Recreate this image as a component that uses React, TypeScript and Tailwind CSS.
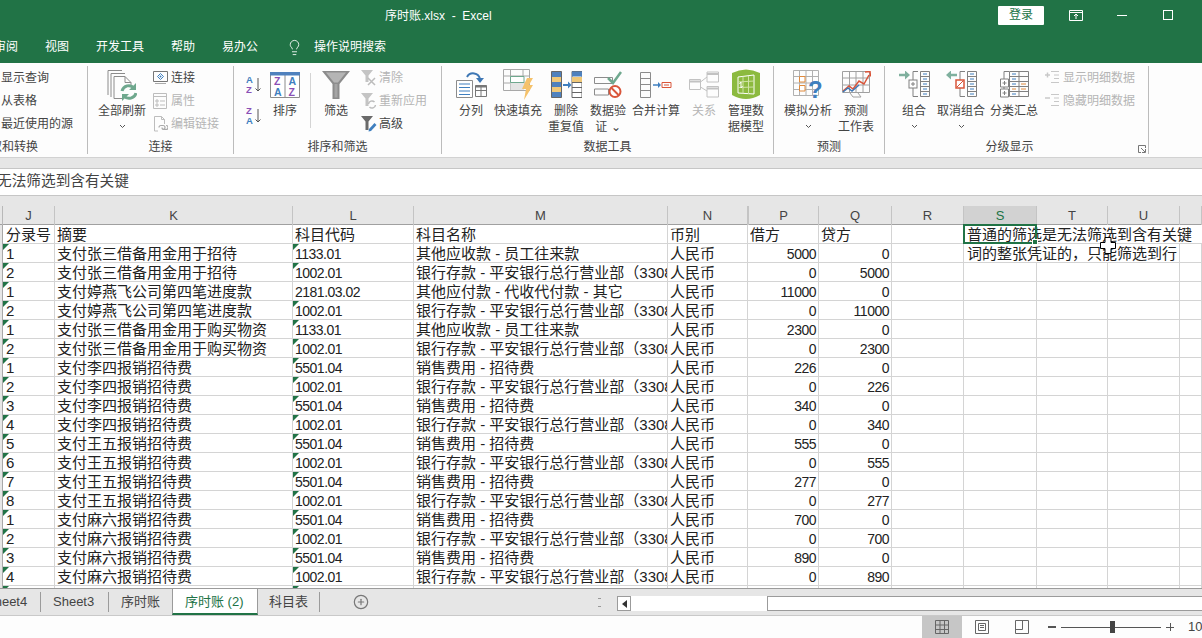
import { Lightbulb, CirclePlus } from "lucide-react";

const BANK = "银行存款 - 平安银行总行营业部（3308";
const COST = "销售费用 - 招待费";
const STAFF = "其他应收款 - 员工往来款";
const PAY = "支付张三借备用金用于招待";
const LOAN = "支付婷燕飞公司第四笔进度款";
const BUY = "支付张三借备用金用于购买物资";
const LI = "支付李四报销招待费";
const WANG = "支付王五报销招待费";
const MA = "支付麻六报销招待费";

// entry, summary, code, name, debit, credit, flag on code cell
const rows: [string, string, string, string, string, string, boolean][] = [
  ["1", PAY, "1133.01", STAFF, "5000", "0", true],
  ["2", PAY, "1002.01", BANK, "0", "5000", true],
  ["1", LOAN, "2181.03.02", "其他应付款 - 代收代付款 - 其它", "11000", "0", false],
  ["2", LOAN, "1002.01", BANK, "0", "11000", true],
  ["1", BUY, "1133.01", STAFF, "2300", "0", true],
  ["2", BUY, "1002.01", BANK, "0", "2300", true],
  ["1", LI, "5501.04", COST, "226", "0", true],
  ["2", LI, "1002.01", BANK, "0", "226", true],
  ["3", LI, "5501.04", COST, "340", "0", true],
  ["4", LI, "1002.01", BANK, "0", "340", true],
  ["5", WANG, "5501.04", COST, "555", "0", true],
  ["6", WANG, "1002.01", BANK, "0", "555", true],
  ["7", WANG, "5501.04", COST, "277", "0", true],
  ["8", WANG, "1002.01", BANK, "0", "277", true],
  ["1", MA, "5501.04", COST, "700", "0", true],
  ["2", MA, "1002.01", BANK, "0", "700", true],
  ["3", MA, "5501.04", COST, "890", "0", true],
  ["4", MA, "1002.01", BANK, "0", "890", true],
  ["", "", "", "", "", "", true],
];

const GRID = "grid grid-cols-[3px_52px_238px_121px_254px_80px_71px_73px_72px_73px_71px_72px_1fr]";
const FIRST = "relative h-[19px] border-r border-b border-[#d4d4d4] overflow-hidden whitespace-nowrap text-[15px] leading-[20px] text-[#222] pl-[3px]";
const CELL = "relative h-[19px] border-r border-b border-[#d4d4d4] overflow-hidden whitespace-nowrap text-[15px] leading-[20px] text-[#222] pl-[2px]";
const CODE = "relative h-[19px] border-r border-b border-[#d4d4d4] overflow-hidden whitespace-nowrap text-[14px] tracking-[-0.5px] leading-[20px] text-[#222] pl-[2px]";
const NUM = "relative h-[19px] border-r border-b border-[#d4d4d4] overflow-hidden whitespace-nowrap text-[14px] tracking-[-0.5px] leading-[20px] text-[#222] text-right pr-[2px]";
const EMPTY = "h-[19px] border-r border-b border-[#d4d4d4]";
const GUTTER = "h-[19px] bg-[#e6e6e6] border-r border-[#a8a8a8]";

const Flag = () => (
  <span className="absolute left-0 top-0 w-0 h-0 border-t-[6px] border-r-[6px] border-t-[#217346] border-r-transparent" />
);

const Chevron = () => (
  <svg width="7" height="5" viewBox="0 0 7 5" className="inline-block">
    <path d="M1 1l2.500 2.500L6 1" fill="none" stroke="#555" strokeWidth="1" />
  </svg>
);

const Big = ({ w, icon, lines, grey, chevron }: { w: string; icon: React.ReactNode; lines: string[]; grey?: boolean; chevron?: boolean }) => (
  <div className={`${w} shrink-0 flex flex-col items-center text-[12px] leading-[16px] ${grey ? "text-[#b5b5b5]" : "text-[#444]"}`}>
    <div className="h-[37px] flex items-center justify-center">{icon}</div>
    {lines.map(l => <div key={l} className="whitespace-nowrap">{l}</div>)}
    {chevron && <div className="h-[16px] -mt-[1px] flex items-center justify-center"><Chevron /></div>}
  </div>
);

const Small = ({ icon, text, grey, gap }: { icon?: React.ReactNode; text: string; grey?: boolean; gap?: string }) => (
  <div className={`h-[23px] flex items-center whitespace-nowrap text-[12px] ${gap || "gap-[3px]"} ${grey ? "text-[#b5b5b5]" : "text-[#444]"}`}>
    {icon}
    <span>{text}</span>
  </div>
);

const Label = ({ text, cls }: { text: string; cls?: string }) => (
  <div className={`h-[16px] text-[12px] leading-[18px] text-[#444] text-center whitespace-nowrap ${cls || ""}`}>{text}</div>
);

/* ribbon icons */
const RefreshAll = () => (
  <svg width="30" height="32" viewBox="0 0 30 32" fill="none" stroke="#8c8c8c">
    <path d="M1 26V1.500H15M4 28V4.500H18M7 29.500V7.500H18L24 13.500V18M18 7.500V13.500H24M7 29.500H15" />
    <path d="M15 22a7 7 0 0 1 12-3" stroke="#6fa88e" strokeWidth="3" />
    <path d="M29 24a7 7 0 0 1-12 3" stroke="#6fa88e" strokeWidth="3" />
    <path d="M29 14v7h-7zM15 32v-7h7z" fill="#6fa88e" stroke="none" />
  </svg>
);
const Connect = () => (
  <svg width="15" height="14" viewBox="0 0 15 14" fill="none">
    <path d="M.5.5h14v10h-14z" stroke="#777" />
    <path d="M2 12.500h11" stroke="#aaa" />
    <path d="M7.500 2.500l3 3-3 3-3-3z" stroke="#3f7fbf" />
    <circle cx="7.500" cy="5.500" r="1" fill="#3f7fbf" />
  </svg>
);
const Props = () => (
  <svg width="14" height="16" viewBox="0 0 14 16" fill="none" stroke="#bdbdbd">
    <path d="M.5.5h13v15H.5zM.5 3.500h13" />
    <path d="M3 7h2v2H3zM3 11h2v2H3zM7 8h5M7 12h5" />
  </svg>
);
const EditLinks = () => (
  <svg width="15" height="16" viewBox="0 0 15 16" fill="none" stroke="#bdbdbd">
    <path d="M1.500 15V.5h7l3 3V8M8.500.5v3h3M1.500 15H5" />
    <path d="M6 11.500a2 2 0 0 1 2-2h2a2 2 0 0 1 0 4M13 9.500a2 2 0 0 1 0 4h-2a2 2 0 0 1-2-2" strokeWidth="1.200" stroke="#aaa" />
  </svg>
);
const SortSmall = ({ top, bottom, topC, bottomC }: { top: string; bottom: string; topC: string; bottomC: string }) => (
  <svg width="15" height="18" viewBox="0 0 15 18">
    <text x="0" y="8" fontSize="9.500" fontWeight="700" fill={topC} fontFamily="Liberation Sans">{top}</text>
    <text x="0" y="17.500" fontSize="9.500" fontWeight="700" fill={bottomC} fontFamily="Liberation Sans">{bottom}</text>
    <path d="M12 3v13M9.500 13.500L12 16l2.500-2.500" fill="none" stroke="#555" />
  </svg>
);
const SortBig = () => (
  <svg width="30" height="26" viewBox="0 0 30 26">
    <path d="M.5.5h29v25H.5zM15 .5v25" fill="#fff" stroke="#8c8c8c" />
    <path d="M0 0h30v3.500H0z" fill="#4f81bd" />
    <text x="4" y="13" fontSize="10.500" fontWeight="700" fill="#8a4fb5" fontFamily="Liberation Sans">Z</text>
    <text x="4" y="23.500" fontSize="10.500" fontWeight="700" fill="#3f7fbf" fontFamily="Liberation Sans">A</text>
    <text x="18.500" y="13" fontSize="10.500" fontWeight="700" fill="#3f7fbf" fontFamily="Liberation Sans">A</text>
    <text x="18.500" y="23.500" fontSize="10.500" fontWeight="700" fill="#8a4fb5" fontFamily="Liberation Sans">Z</text>
  </svg>
);
const Funnel = () => (
  <svg width="28" height="28" viewBox="0 0 28 28">
    <path d="M0 0h28L17.500 13v15h-7V13z" fill="#8c8c8c" />
    <path d="M4 1.500h20L16 11.500h-4z" fill="#b5b5b5" />
    <path d="M12.500 13h3v13.500h-3z" fill="#a5a5a5" />
  </svg>
);
const ClearI = () => (
  <svg width="16" height="16" viewBox="0 0 16 16" fill="none">
    <path d="M0 0h12L7.500 5.500V12h-3V5.500z" fill="#c4c4c4" />
    <path d="M7 8l7 7M14 8l-7 7" stroke="#bcbcbc" strokeWidth="1.500" />
  </svg>
);
const ReapplyI = () => (
  <svg width="16" height="16" viewBox="0 0 16 16" fill="none">
    <path d="M0 0h12L7.500 5.500V13h-3V5.500z" fill="#c4c4c4" />
    <path d="M7.500 11a3.500 3.500 0 0 1 6-2M14.500 12a3.500 3.500 0 0 1-6 2" stroke="#bcbcbc" strokeWidth="1.500" />
  </svg>
);
const AdvancedI = () => (
  <svg width="16" height="16" viewBox="0 0 16 16" fill="none">
    <path d="M0 0h12L7.500 5.500V14h-3V5.500z" fill="#6a6a6a" />
    <path d="M8 13l-.5 2.500L10 15l5.500-6-2-2z" fill="#3f7fbf" />
  </svg>
);
const TextToCols = () => (
  <svg width="31" height="27" viewBox="0 0 31 27" fill="none">
    <path d="M.5 9.500h16v17H.5z" fill="#fff" stroke="#8c8c8c" />
    <path d="M3 13h11M3 16.500h11M3 20h11M3 23.500h11" stroke="#3f7fbf" />
    <path d="M19.500 14.500h11v11h-11zM19.500 19.500h11M25 14.500v11" stroke="#777" />
    <path d="M19.500 14.500h11v2h-11z" fill="#777" />
    <path d="M11 6a7 7 0 0 1 13 2" stroke="#3f78b5" strokeWidth="2" />
    <path d="M20 7h8l-4 5z" fill="#3f78b5" />
  </svg>
);
const FlashFill = () => (
  <svg width="31" height="31" viewBox="0 0 31 31" fill="none">
    <path d="M.5.5h26v21H.5zM.5 7h26M.5 14h26M7.500.500v21M20 .5v21" stroke="#a8a8a8" />
    <path d="M7.500 7.500H21v6H7.500z" fill="#fff" stroke="#6fa88e" />
    <path d="M7.500 14H21v7H7.500z" fill="#e4e4e4" />
    <path d="M24 9h6l-4 7h4L21 31l2-11h-4z" fill="#f5c26b" />
  </svg>
);
const RemoveDup = () => (
  <svg width="31" height="27" viewBox="0 0 31 27">
    <path d="M.5.5h10v26H.5z" fill="#4f81bd" stroke="#666" />
    <path d="M1 6h9v5H1zM1 16h9v5H1z" fill="#f0c878" />
    <path d="M21 .5h10v26H21z" fill="#fff" stroke="#666" />
    <path d="M21 .500h10v5H21z" fill="#4f81bd" />
    <path d="M21 6h10v5H21z" fill="#f0c878" />
    <path d="M21 11.500h10M21 16.500h10M21 21.500h10" stroke="#666" />
    <path d="M12 14h6" stroke="#3f7fbf" strokeWidth="2" />
    <path d="M17 10.500l3.500 3.500-3.500 3.500z" fill="#3f7fbf" />
  </svg>
);
const Validate = () => (
  <svg width="28" height="27" viewBox="0 0 28 27" fill="none">
    <path d="M.5 6.500h18v6H.5zM.5 18h14v6H.5z" stroke="#8c8c8c" />
    <path d="M14 7l5 5L27 1" stroke="#6fa88e" strokeWidth="2.500" />
    <circle cx="21" cy="20.500" r="5.500" fill="#fff" stroke="#d9553a" strokeWidth="2" />
    <path d="M17.500 17l7 7" stroke="#d9553a" strokeWidth="2" />
  </svg>
);
const Consolidate = () => (
  <svg width="32" height="26" viewBox="0 0 32 26" fill="none">
    <path d="M.5.5h10v25H.5zM.5 6.500h10M.5 12.500h10M.5 18.500h10" stroke="#8c8c8c" />
    <path d="M13 13h6" stroke="#3f7fbf" strokeWidth="1.500" />
    <path d="M18 10l3 3-3 3z" fill="#3f7fbf" />
    <path d="M22 10.500h9v5h-9z" stroke="#d9553a" />
    <path d="M24 13h5" stroke="#d9553a" />
  </svg>
);
const Relations = () => (
  <svg width="30" height="27" viewBox="0 0 30 27" fill="none" stroke="#c2c2c2">
    <path d="M.5 8.500h11v10H.5zM18 1h11.500v10H18zM18 15.500h11.500v10.500H18z" />
    <path d="M.5 10.500h11M18 3h11.500M18 17.500h11.500" strokeWidth="2" />
    <path d="M11.500 11L18 6M11.500 16L18 20" />
  </svg>
);
const DataModel = () => (
  <svg width="28" height="31" viewBox="0 0 28 31">
    <path d="M0 4Q14-3 28 4V26Q14 34 0 26z" fill="#8cba3f" />
    <path d="M6 8l16-2v19L6 24z" fill="none" stroke="#fff" />
    <path d="M11 7.500V24.500M16.500 7V25M6 13l16-1M6 18.500l16-.5" fill="none" stroke="#cfe3a5" />
    <path d="M9 13v6M9 13l-1.500 2M9 19l1.500-2" fill="none" stroke="#fff" />
  </svg>
);
const WhatIf = () => (
  <svg width="31" height="30" viewBox="0 0 31 30" fill="none">
    <path d="M.5.5h25v25H.5zM.5 6.500h25M.5 13h25M.5 19.500h25M6.500.500v25M13 .5v25M19.500 .5v25" stroke="#b0b0b0" />
    <path d="M6.500 6.500H12V12H6.500zM6.500 15.500H12V21H6.500z" fill="#fff" stroke="#e08a3c" />
    <text x="15" y="28" fontSize="24" fontWeight="700" fill="#3f7fbf" fontFamily="Liberation Sans">?</text>
  </svg>
);
const Forecast = () => (
  <svg width="29" height="27" viewBox="0 0 29 27" fill="none">
    <path d="M.5.5h27v21H.5zM.5 7h27M.5 14h27M7.500.500v21M14 .5v21M21 .5v21" stroke="#a0a0a0" />
    <path d="M1 20l6-5 4 3 6-8 5 3 5-9" stroke="#d9553a" strokeWidth="1.500" />
    <path d="M23 1l5-.5.5 5" stroke="#d9553a" strokeWidth="1.500" />
    <path d="M1 21l5-4 4 3 7-6" stroke="#3f78b5" strokeWidth="1.500" />
    <path d="M8 22l3 4h8l-3-4" stroke="#a0a0a0" />
  </svg>
);
const Rows = ({ x }: { x: number }) => (
  <g>
    <path d={`M${x}.5 .5h9v25h-9zM${x}.5 5.500h9M${x}.5 10.500h9M${x}.5 15.500h9M${x}.5 20.500h9`} stroke="#808080" fill="none" />
    <path d={`M${x + 3} 3h4M${x + 3} 8h4M${x + 3} 13h4M${x + 3} 18h4M${x + 3} 23h4`} stroke="#3f7fbf" />
  </g>
);
const Group = () => (
  <svg width="31" height="27" viewBox="0 0 31 27" fill="none">
    <path d="M14 .5h5M14 .5v25h5" stroke="#808080" />
    <rect x="10" y="9" width="8" height="8" fill="#fff" stroke="#808080" />
    <path d="M12 13h4M14 11v4" stroke="#808080" />
    <path d="M0 4h8" stroke="#7fb09e" strokeWidth="2.500" />
    <path d="M6 -.5l5 4.500-5 4.500z" fill="#7fb09e" />
    <Rows x={21} />
  </svg>
);
const Ungroup = () => (
  <svg width="31" height="27" viewBox="0 0 31 27" fill="none">
    <path d="M14 .5h5M14 .5v25h5" stroke="#808080" />
    <rect x="10" y="9" width="8" height="8" fill="#fff" stroke="#d9553a" strokeWidth="1.500" />
    <path d="M11 16l6-6" stroke="#d9553a" />
    <path d="M3 4h8" stroke="#7fb09e" strokeWidth="2.500" />
    <path d="M5 -.5L0 4l5 4.500z" fill="#7fb09e" />
    <Rows x={21} />
  </svg>
);
const Subtotal = () => (
  <svg width="29" height="27" viewBox="0 0 29 27" fill="none">
    <path d="M4 .5h5M4 .5v25h5" stroke="#808080" />
    <path d="M.5 8h8v8h-8zM.5 18h8v8h-8z" fill="#fff" stroke="#808080" />
    <path d="M2.500 12h4M4.500 10v4M2.500 22h4M4.500 20v4" stroke="#808080" />
    <path d="M9.500 .5h19v25h-19zM9.500 5.500h19M9.500 10.500h19M9.500 15.500h19M9.500 20.500h19M19 .5v25" stroke="#808080" />
    <path d="M12 3h4M12 8h4M12 13h4M12 23h4" stroke="#3f7fbf" />
    <path d="M12 18h4M21 13h5M21 18h5" stroke="#e08a3c" />
  </svg>
);
const ShowDetail = ({ plus }: { plus: boolean }) => (
  <svg width="15" height="13" viewBox="0 0 15 13" fill="none" stroke="#c8c8c8">
    <path d="M0 4h5" strokeWidth="1.500" />
    {plus && <path d="M2.500 1.500v5" strokeWidth="1.500" />}
    <path d="M6 .5h8M9 4h5M9 7.500h5M6 11.500h8" />
  </svg>
);

export default function App() {
  return (
    <div className="relative w-[1202px] h-[638px] overflow-hidden flex flex-col bg-white font-['Liberation_Sans','Noto_Sans_CJK_SC',sans-serif]">
      {/* title bar */}
      <div className="h-[63px] shrink-0 bg-[#217346] text-white text-[12px] flex flex-col">
        <div className="h-[30px] flex items-center">
          <div className="ml-[385px] w-[570px] pt-[2px] whitespace-pre">序时账.xlsx  -  Excel</div>
          <div className="ml-[43px] w-[46px] h-[19px] bg-white rounded-[1px] text-[#217346] text-[12px] leading-[19px] text-center">登录</div>
          <svg width="14" height="11" viewBox="0 0 14 11" fill="none" stroke="#fff" className="ml-[25px]">
            <path d="M.5.5h13v10H.5zM.5 2.500h13M7 9V4.500M5 6l2-2 2 2" />
          </svg>
          <div className="ml-[34px] w-[10px] h-px bg-white" />
          <div className="ml-[36px] w-[10px] h-[10px] border border-white" />
        </div>
        <div className="h-[33px] flex items-center gap-[27px] -ml-[6px] pt-[1px]">
          <span>审阅</span>
          <span>视图</span>
          <span>开发工具</span>
          <span>帮助</span>
          <span>易办公</span>
          <div className="flex items-center gap-[11px] ml-[1px]">
            <Lightbulb size={17} strokeWidth={1.2} color="#fff" />
            <span>操作说明搜索</span>
          </div>
        </div>
      </div>

      {/* ribbon */}
      <div className="h-[95px] shrink-0 bg-[#fdfdfd] border-b border-[#d2d2d2] pt-[3px] flex">
        <div className="w-[88px] h-[88px] border-r border-[#bcbcbc] flex flex-col">
          <div className="h-[72px] pl-[1px]">
            <Small text="显示查询" />
            <Small text="从表格" />
            <Small text="最近使用的源" />
          </div>
          <Label text="获取和转换" cls="text-left -ml-[22px]" />
        </div>

        <div className="w-[146px] h-[88px] border-r border-[#bcbcbc] flex flex-col">
          <div className="h-[72px] flex pl-[9px]">
            <Big w="w-[50px]" icon={<RefreshAll />} lines={["全部刷新"]} chevron />
            <div className="ml-[6px]">
              <Small icon={<Connect />} text="连接" />
              <Small icon={<Props />} text="属性" grey gap="gap-[4px]" />
              <Small icon={<EditLinks />} text="编辑链接" grey />
            </div>
          </div>
          <Label text="连接" />
        </div>

        <div className="w-[208px] h-[88px] border-r border-[#bcbcbc] flex flex-col">
          <div className="h-[72px] flex pl-[12px]">
            <div className="w-[15px] flex flex-col gap-[13px] pt-[9px]">
              <SortSmall top="A" bottom="Z" topC="#3f7fbf" bottomC="#8a4fb5" />
              <SortSmall top="Z" bottom="A" topC="#8a4fb5" bottomC="#3f7fbf" />
            </div>
            <Big w="w-[40px] ml-[4px]" icon={<SortBig />} lines={["排序"]} />
            <div className="ml-[5px] mt-[7px] w-px h-[55px] bg-[#d4d4d4]" />
            <Big w="w-[40px] ml-[5px]" icon={<Funnel />} lines={["筛选"]} />
            <div className="ml-[5px]">
              <Small icon={<ClearI />} text="清除" grey gap="gap-[2px]" />
              <Small icon={<ReapplyI />} text="重新应用" grey gap="gap-[2px]" />
              <Small icon={<AdvancedI />} text="高级" gap="gap-[2px]" />
            </div>
          </div>
          <Label text="排序和筛选" />
        </div>

        <div className="w-[332px] h-[88px] border-r border-[#bcbcbc] flex flex-col">
          <div className="h-[72px] flex pl-[12px]">
            <Big w="w-[34px]" icon={<TextToCols />} lines={["分列"]} />
            <Big w="w-[60px]" icon={<FlashFill />} lines={["快速填充"]} />
            <Big w="w-[36px]" icon={<RemoveDup />} lines={["删除", "重复值"]} />
            <Big w="w-[48px]" icon={<Validate />} lines={["数据验", "证 ⌄"]} />
            <Big w="w-[48px]" icon={<Consolidate />} lines={["合并计算"]} />
            <Big w="w-[48px]" icon={<Relations />} lines={["关系"]} grey />
            <Big w="w-[36px]" icon={<DataModel />} lines={["管理数", "据模型"]} />
          </div>
          <Label text="数据工具" />
        </div>

        <div className="w-[111px] h-[88px] border-r border-[#bcbcbc] flex flex-col">
          <div className="h-[72px] flex pl-[10px]">
            <Big w="w-[48px]" icon={<WhatIf />} lines={["模拟分析"]} chevron />
            <Big w="w-[48px]" icon={<Forecast />} lines={["预测", "工作表"]} />
          </div>
          <Label text="预测" />
        </div>

        <div className="relative w-[264px] h-[88px] border-r border-[#bcbcbc] flex flex-col">
          <div className="h-[72px] flex pl-[5px]">
            <Big w="w-[48px]" icon={<Group />} lines={["组合"]} chevron />
            <Big w="w-[46px]" icon={<Ungroup />} lines={["取消组合"]} chevron />
            <Big w="w-[60px]" icon={<Subtotal />} lines={["分类汇总"]} />
            <div className="ml-[1px]">
              <Small icon={<ShowDetail plus />} text="显示明细数据" grey />
              <Small icon={<ShowDetail plus={false} />} text="隐藏明细数据" grey />
            </div>
          </div>
          <Label text="分级显示" cls="pr-[14px]" />
          <svg width="8" height="8" viewBox="0 0 8 8" fill="none" stroke="#777" className="absolute right-[2px] bottom-[1px]">
            <path d="M7.500 3V.5H.5v7H3M3 3l4 4M7.500 4v3.500H4" />
          </svg>
        </div>
      </div>

      {/* formula bar */}
      <div className="h-[11px] shrink-0 bg-[#e6e6e6] border-b border-[#c6c6c6]" />
      <div className="h-[27px] shrink-0 bg-white border-b border-[#c6c6c6] text-[14.670px] leading-[25px] text-[#444] whitespace-nowrap -ml-[3px]">无法筛选到含有关键</div>
      <div className="h-[10px] shrink-0 bg-[#e6e6e6]" />

      {/* sheet */}
      <div className="h-[382px] shrink-0 overflow-hidden">
        <div className={`${GRID} h-[19px] bg-[#e6e6e6] border-b border-[#a0a0a0] text-[13px] leading-[19px] text-[#444] text-center`}>
          <div className="border-r border-[#b8b8b8]" />
          {["J", "K", "L", "M", "N", "P", "Q", "R", "S", "T", "U", ""].map(c => (
            <div key={c} className={`border-r border-[#c4c4c4] ${c === "S" ? "bg-[#d2d2d2] text-[#217346]" : ""} ${c === "P" ? "border-l" : ""}`}>{c}</div>
          ))}
        </div>

        <div className={GRID}>
          <div className={GUTTER} />
          <div className={FIRST}>分录号</div>
          <div className={CELL}>摘要</div>
          <div className={CELL}>科目代码</div>
          <div className={CELL}>科目名称</div>
          <div className={CELL}>币别</div>
          <div className={CELL}>借方</div>
          <div className={CELL}>贷方</div>
          <div className={EMPTY} />
          <div className="relative col-span-4 h-[19px] border-b border-[#d4d4d4] whitespace-nowrap text-[15px] leading-[20px] text-[#222] pl-[3px]">
            普通的筛选是无法筛选到含有关键
            <div className="absolute -left-px -top-px w-[74px] h-[20px] border-2 border-[#217346]">
              <span className="absolute -right-[3px] -bottom-[3px] w-[6px] h-[6px] bg-[#217346] border border-white" />
            </div>
          </div>
        </div>

        {rows.map((r, i) => (
          <div key={i} className={GRID}>
            <div className={GUTTER} />
            <div className={FIRST}><Flag />{r[0]}</div>
            <div className={CELL}>{r[1]}</div>
            <div className={CODE}>{r[6] && <Flag />}{r[2]}</div>
            <div className={CELL}>{r[3]}</div>
            <div className={CELL}>{r[0] ? "人民币" : ""}</div>
            <div className={NUM}>{r[4]}</div>
            <div className={NUM}>{r[5]}</div>
            <div className={EMPTY} />
            {i === 0 ? (
              <>
                <div className="relative col-span-3 h-[19px] border-r border-b border-[#d4d4d4] whitespace-nowrap text-[15px] leading-[20px] text-[#222] pl-[3px]">词的整张凭证的，只能筛选到行</div>
                <div className={EMPTY} />
              </>
            ) : (
              <>
                <div className={EMPTY} />
                <div className={EMPTY} />
                <div className={EMPTY} />
                <div className={EMPTY} />
              </>
            )}
          </div>
        ))}
      </div>

      {/* sheet tabs */}
      <div className="h-[28px] shrink-0 bg-[#e6e6e6] border-t border-[#9b9b9b] border-b border-b-[#c9c9c9] flex items-start text-[13px] text-[#444] whitespace-nowrap">
        <div className="-ml-[14px] w-[55px] h-[20px] mt-[3px] leading-[20px] border-r border-[#9b9b9b] shrink-0">Sheet4</div>
        <div className="w-[68px] h-[20px] mt-[3px] leading-[20px] pl-[12px] border-r border-[#9b9b9b] shrink-0">Sheet3</div>
        <div className="w-[63px] h-[20px] mt-[3px] leading-[20px] pl-[12px] shrink-0">序时账</div>
        <div className="w-[86px] h-[26px] bg-white border-x border-[#9b9b9b] border-b-2 border-b-[#217346] pl-[12px] leading-[26px] text-[#217346] shrink-0">序时账 (2)</div>
        <div className="w-[62px] h-[20px] mt-[3px] leading-[20px] pl-[11px] border-r border-[#9b9b9b] shrink-0">科目表</div>
        <div className="ml-[33px] mt-[5px] shrink-0"><CirclePlus size={16} strokeWidth={1.8} color="#777" /></div>
        <div className="ml-[229px] mt-[9px] w-[2px] h-[9px] border-x-0 border-y border-dotted border-[#999] shrink-0" />
        <div className="ml-[17px] mt-[7px] h-[15px] flex shrink-0">
          <div className="w-[14px] h-[15px] bg-white border border-[#9b9b9b] flex items-center justify-center">
            <span className="w-0 h-0 border-y-[4px] border-y-transparent border-r-[5px] border-r-[#333]" />
          </div>
          <div className="w-[136px] bg-white" />
          <div className="w-[436px] bg-white border border-[#9b9b9b]" />
        </div>
      </div>

      {/* status bar */}
      <div className="h-[22px] shrink-0 bg-[#fdfdfd] flex items-center pl-[922px] whitespace-nowrap">
        <div className="w-[40px] h-[22px] shrink-0 bg-[#c6c6c6] flex items-center justify-center">
          <svg width="14" height="14" viewBox="0 0 14 14" fill="none" stroke="#666">
            <path d="M.5.5h13v13H.5zM.5 5h13M.5 9.500h13M5 .5v13M9.500 .5v13" />
          </svg>
        </div>
        <div className="w-[40px] shrink-0 flex items-center justify-center">
          <svg width="14" height="14" viewBox="0 0 14 14" fill="none" stroke="#666">
            <path d="M.5.5h13v13H.5zM3.500 3.500h7v7h-7zM5 5.500h4M5 7.500h4" />
          </svg>
        </div>
        <div className="w-[40px] shrink-0 flex items-center justify-center">
          <svg width="14" height="14" viewBox="0 0 14 14" fill="none" stroke="#666">
            <path d="M.5.5h13v13H.5zM.5 9.500h7V.5" />
          </svg>
        </div>
        <div className="ml-[6px] w-[8px] h-[1.500px] bg-[#555] shrink-0" />
        <div className="relative ml-[5px] w-[100px] h-px bg-[#555] shrink-0">
          <span className="absolute left-[49px] -top-[6px] w-[5px] h-[12px] bg-[#444]" />
        </div>
        <div className="relative ml-[5px] w-[8px] h-[8px] shrink-0">
          <span className="absolute left-0 top-[3.500px] w-[8px] h-px bg-[#555]" />
          <span className="absolute top-0 left-[3.500px] w-px h-[8px] bg-[#555]" />
        </div>
        <div className="ml-[14px] text-[13px] text-[#444] shrink-0">100%</div>
      </div>

      {/* mouse cursor */}
      <svg width="16" height="17" viewBox="0 0 16 17" className="absolute left-[1100px] top-[237px]">
        <path d="M5 .5h6v5h4.500v6H11v5H5v-5H.5v-6H5z" fill="#fff" stroke="#000" />
      </svg>
    </div>
  );
}
